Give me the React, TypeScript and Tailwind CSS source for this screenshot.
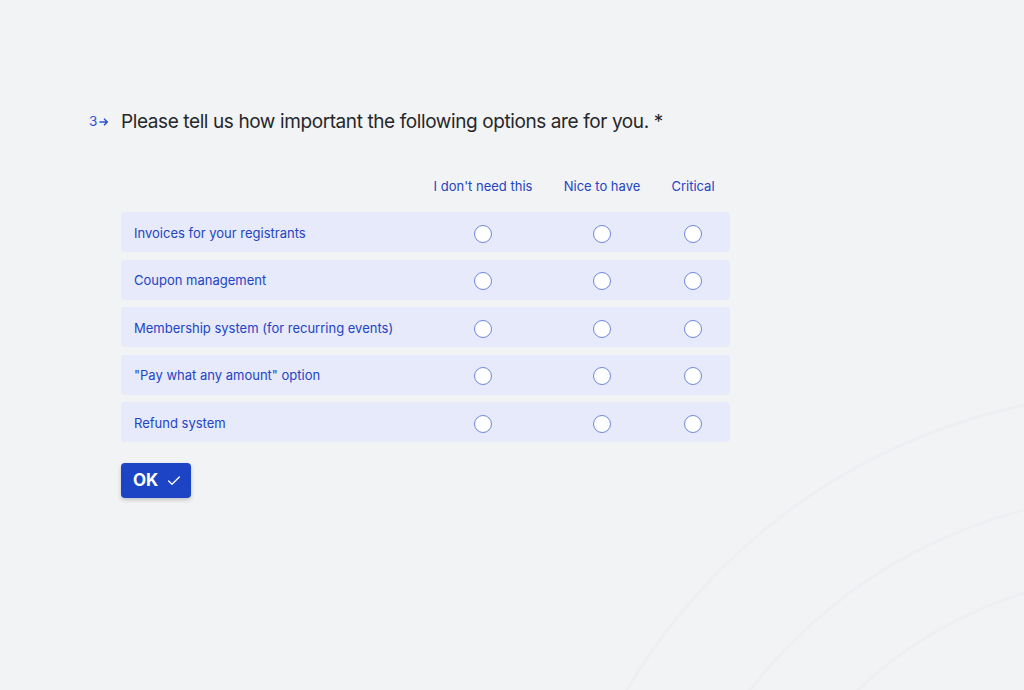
import { Check } from "lucide-react"

const options = [
	"Invoices for your registrants",
	"Coupon management",
	"Membership system (for recurring events)",
	"\"Pay what any amount\" option",
	"Refund system",
]

const columns = ["I don't need this", "Nice to have", "Critical"]

function Radio() {
	return <span className="block w-[18px] h-[18px] rounded-full border-[1.5px] border-[#6f86dc] bg-white" />
}

export default function App() {
	return (
		<div
			className="relative w-full h-[690px] overflow-hidden bg-[#f2f3f5] text-[#2444c4]"
			style={{ fontFamily: "Inter, 'Noto Sans', sans-serif" }}
		>
			{/* faint decorative arcs */}
			<svg className="absolute left-0 top-0 pointer-events-none" width="1024" height="690" viewBox="0 0 1024 690">
				<circle cx="1150" cy="1000" r="608" fill="none" stroke="#eeeff2" strokeWidth="3" />
				<circle cx="1150" cy="1000" r="506" fill="none" stroke="#eeeff2" strokeWidth="3" />
				<circle cx="1150" cy="1000" r="426" fill="none" stroke="#eeeff2" strokeWidth="3" />
			</svg>

			<div className="relative pt-[109px] pl-[89px]">
				<div className="flex items-start">
					<div className="flex items-center gap-[2px] w-[32px] pt-[6px] text-[13.5px] leading-none text-[#2f52d6]">
						<span>3</span>
						<svg width="10" height="10" viewBox="0 0 10 10">
							<path d="M1 5h7M5.5 2.2L8.3 5 5.5 7.8" fill="none" stroke="currentColor" strokeWidth="1.6" strokeLinecap="round" strokeLinejoin="round" />
						</svg>
					</div>
					<h1 className="text-[19px] leading-[26px] text-[#262729] tracking-[-0.4px]">
						Please tell us how important the following options are for you. *
					</h1>
				</div>

				<div className="ml-[32px] mt-[36px] w-[609px]">
					<div className="grid grid-cols-[302px_120px_118px_64px] pr-[5px] h-[32px] items-center text-[13px]">
						<span />
						{columns.map((c) => (
							<span key={c} className="text-center whitespace-nowrap">
								{c}
							</span>
						))}
					</div>

					<div className="mt-[9px] flex flex-col gap-[7.5px]">
						{options.map((o) => (
							<div
								key={o}
								className="grid grid-cols-[302px_120px_118px_64px] pr-[5px] pt-[3px] h-[40px] items-center rounded-[4px] bg-[#e6eafa]"
							>
								<span className="pl-[13px] text-[13px] whitespace-nowrap">{o}</span>
								{columns.map((c) => (
									<span key={c} className="flex justify-center">
										<Radio />
									</span>
								))}
							</div>
						))}
					</div>

					<button
						type="button"
						className="mt-[21px] flex items-center gap-[8px] h-[35px] w-[70px] pl-[12px] rounded-[4px] bg-[#1c44c4] text-white text-[17px] font-bold shadow-[0_2px_4px_rgba(0,0,0,0.2)]"
					>
						OK
						<Check size={16} strokeWidth={2} />
					</button>
				</div>
			</div>
		</div>
	)
}
